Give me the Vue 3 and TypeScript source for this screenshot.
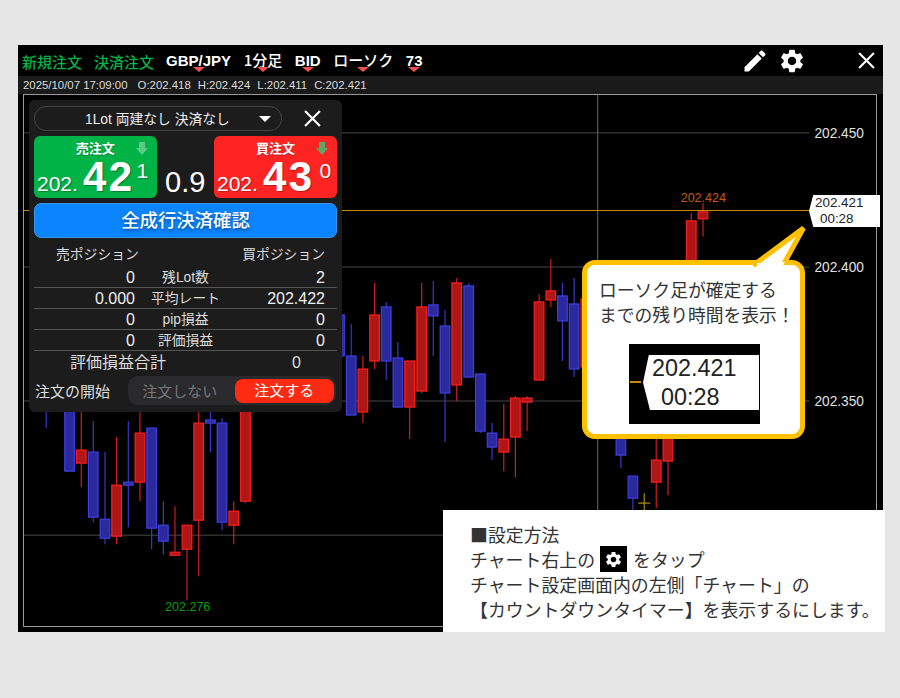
<script setup lang="ts">
type Candle = [number, number, number, number, number, 'r' | 'b']

// x, body top, body bottom, wick top, wick bottom, colour
const candles: Candle[] = [
  [17.4, 130, 308, 120, 320, 'b'],
  [46.7, 380, 405, 360, 428, 'b'],
  [70, 380, 471, 370, 471, 'b'],
  [81.7, 450, 463, 400, 487, 'r'],
  [93.7, 452, 517, 421, 522, 'b'],
  [105.4, 519, 538, 452, 544, 'b'],
  [117, 485, 536, 437, 544, 'r'],
  [128.7, 482, 485, 421, 527, 'b'],
  [140.3, 433, 482, 400, 501, 'r'],
  [152, 428, 528, 428, 549, 'b'],
  [163.7, 525, 541, 501, 554, 'b'],
  [175.3, 552, 555, 506, 555, 'r'],
  [187.3, 525, 549, 525, 600, 'r'],
  [199, 423, 520, 400, 576, 'r'],
  [210.7, 420, 423, 400, 452, 'b'],
  [222.3, 423, 522, 418, 530, 'b'],
  [234, 511, 525, 501, 544, 'r'],
  [245.7, 400, 501, 400, 503, 'r'],
  [339.6, 315, 356, 300, 356, 'b'],
  [351.3, 356, 415, 324, 415, 'b'],
  [363, 369, 412, 356, 423, 'r'],
  [374.7, 315, 361, 283, 369, 'r'],
  [386.3, 307, 361, 302, 380, 'b'],
  [398, 358, 407, 342, 407, 'b'],
  [409.7, 361, 407, 361, 439, 'r'],
  [421.7, 307, 391, 283, 393, 'r'],
  [433.3, 305, 316, 281, 356, 'b'],
  [445, 326, 393, 310, 442, 'b'],
  [456.7, 283, 385, 278, 401, 'r'],
  [468.7, 286, 377, 283, 377, 'b'],
  [480.3, 374, 431, 374, 433, 'b'],
  [492, 433, 447, 423, 460, 'b'],
  [503.7, 439, 452, 404, 471, 'r'],
  [515.3, 398, 437, 396, 477, 'r'],
  [527, 398, 402, 396, 431, 'r'],
  [539, 302, 380, 294, 380, 'r'],
  [550.7, 291, 300, 259, 307, 'r'],
  [562.3, 296, 321, 283, 361, 'b'],
  [574, 304, 369, 278, 377, 'b'],
  [585.7, 299, 367, 290, 375, 'r'],
  [620.7, 420, 455, 420, 468, 'b'],
  [632.7, 476, 498, 476, 520, 'b'],
  [656, 460, 482, 420, 508, 'r'],
  [667.7, 420, 461, 420, 495, 'r'],
  [691, 221, 280, 213, 280, 'r'],
  [702.7, 212, 219, 203, 237, 'r'],
]

const gridLines = [133, 267, 401, 535]
const axisLabels = [
  { y: 133, text: '202.450' },
  { y: 267, text: '202.400' },
  { y: 401, text: '202.350' },
]

const menuItems = [
  { text: 'GBP/JPY', cjk: false },
  { text: '1分足', cjk: true },
  { text: 'BID', cjk: false },
  { text: 'ローソク', cjk: true },
  { text: '73', cjk: false },
]

const rows = [
  { sell: '0', label: '残Lot数', buy: '2' },
  { sell: '0.000', label: '平均レート', buy: '202.422' },
  { sell: '0', label: 'pip損益', buy: '0' },
  { sell: '0', label: '評価損益', buy: '0' },
]

const gearPath =
  'M19.14 12.94c.04-.3.06-.61.06-.94 0-.32-.02-.64-.07-.94l2.03-1.58c.18-.14.23-.41.12-.61l-1.92-3.32c-.12-.22-.37-.29-.59-.22l-2.39.96c-.5-.38-1.03-.7-1.62-.94l-.36-2.54c-.04-.24-.24-.41-.48-.41h-3.84c-.24 0-.43.17-.47.41l-.36 2.54c-.59.24-1.13.57-1.62.94l-2.39-.96c-.22-.08-.47 0-.59.22L2.74 8.87c-.12.21-.08.47.12.61l2.03 1.58c-.05.3-.09.63-.09.94s.02.64.07.94l-2.03 1.58c-.18.14-.23.41-.12.61l1.92 3.32c.12.22.37.29.59.22l2.39-.96c.5.38 1.03.7 1.62.94l.36 2.54c.05.24.24.41.48.41h3.84c.24 0 .44-.17.47-.41l.36-2.54c.59-.24 1.13-.56 1.62-.94l2.39.96c.22.08.47 0 .59-.22l1.92-3.32c.12-.22.07-.47-.12-.61l-2.01-1.58zM12 15.6c-1.98 0-3.6-1.62-3.6-3.6s1.62-3.6 3.6-3.6 3.6 1.62 3.6 3.6-1.62 3.6-3.6 3.6z'
</script>

<template>
  <div class="page">
    <div class="screen">
      <div class="toolbar">
        <span class="order-link">新規注文</span>
        <span class="order-link">決済注文</span>
        <span v-for="item in menuItems" :key="item.text" :class="['menu-item', { cjk: item.cjk }]">{{ item.text }}</span>
        <svg class="tool-icon pencil" viewBox="0 0 24 24" fill="#fff">
          <path d="M3 17.25V21h3.75L17.81 9.94l-3.75-3.75L3 17.25zM20.71 7.04c.39-.39.39-1.02 0-1.41l-2.34-2.34c-.39-.39-1.02-.39-1.41 0l-1.83 1.83 3.75 3.75 1.83-1.83z" />
        </svg>
        <svg class="tool-icon gear" viewBox="0 0 24 24" fill="#fff"><path :d="gearPath" /></svg>
        <svg class="close-icon" viewBox="0 0 16 16" stroke="#fff" stroke-width="2" fill="none">
          <path d="M1 1l14 14M15 1L1 15" />
        </svg>
      </div>
      <div class="status-bar">
        <span class="status-time">2025/10/07 17:09:00</span>
        <span>O:202.418</span>
        <span>H:202.424</span>
        <span>L:202.411</span>
        <span>C:202.421</span>
      </div>
      <div class="chart">
        <svg class="chart-svg" viewBox="24.5 95.5 851 530">
          <line v-for="y in gridLines" :key="y" x1="20" :y1="y" x2="809" :y2="y" stroke="#303030" stroke-width="1.5" />
          <line x1="597.5" y1="90" x2="597.5" y2="630" stroke="#5a5a5a" stroke-width="1.2" />
          <g v-for="c in candles" :key="c[0]">
            <line
              :x1="c[0]" :y1="c[3]" :x2="c[0]" :y2="c[4]"
              :stroke="c[5] === 'r' ? '#d01c1c' : '#3838c8'"
              stroke-width="1.2"
            />
            <rect
              :x="c[0] - 4.8" :y="c[1]" width="9.6" :height="c[2] - c[1]"
              :fill="c[5] === 'r' ? '#b01616' : '#2a2a9e'"
              :stroke="c[5] === 'r' ? '#f82020' : '#3f3fe0'"
              stroke-width="1.2"
            />
          </g>
          <path d="M644 493v17M638 503h12" stroke="#a88a10" stroke-width="1.2" fill="none" />
          <line x1="20" y1="210.7" x2="809" y2="210.7" stroke="#c98a00" stroke-width="1.2" />
          <text v-for="a in axisLabels" :key="a.y" x="814" :y="a.y + 5" class="axis-label">{{ a.text }}</text>
          <text x="703" y="202" class="high-label">202.424</text>
          <text x="188" y="611" class="low-label">202.276</text>
        </svg>
      </div>
    </div>

    <div class="price-tag">
      <span>202.421</span>
      <span>00:28</span>
    </div>

    <div class="order-panel">
      <div class="panel-head">
        <div class="lot-select">
          <span class="lot-text">1Lot 両建なし 決済なし</span>
          <i class="lot-caret"></i>
        </div>
        <svg class="panel-close" viewBox="0 0 16 16" stroke="#fff" stroke-width="2" fill="none">
          <path d="M1 1l14 14M15 1L1 15" />
        </svg>
      </div>
      <div class="quote-row">
        <div class="quote sell">
          <div class="quote-title">売注文</div>
          <svg class="quote-arrow" viewBox="0 0 12 13" fill="#5ccb85"><path d="M3 0h6v6h3l-6 7-6-7h3z" /></svg>
          <div class="quote-price">
            <span class="price-head">202.</span><span class="price-main">42</span><span class="price-tail">1</span>
          </div>
        </div>
        <div class="spread">0.9</div>
        <div class="quote buy">
          <div class="quote-title">買注文</div>
          <svg class="quote-arrow" viewBox="0 0 12 13" fill="#5aa862"><path d="M3 0h6v6h3l-6 7-6-7h3z" /></svg>
          <div class="quote-price">
            <span class="price-head">202.</span><span class="price-main">43</span><span class="price-tail">0</span>
          </div>
        </div>
      </div>
      <button class="close-all">全成行決済確認</button>
      <div class="pos-head">
        <span>売ポジション</span>
        <span>買ポジション</span>
      </div>
      <div v-for="row in rows" :key="row.label" class="pos-row">
        <span class="pos-sell">{{ row.sell }}</span>
        <span class="pos-label">{{ row.label }}</span>
        <span class="pos-buy">{{ row.buy }}</span>
      </div>
      <div class="pos-total">
        <span>評価損益合計</span>
        <span class="total-value">0</span>
      </div>
      <div class="order-start">
        <span class="start-label">注文の開始</span>
        <div class="toggle">
          <span class="toggle-off">注文しない</span>
          <span class="toggle-on">注文する</span>
        </div>
      </div>
    </div>

    <div class="callout">
      <svg class="callout-tail" viewBox="0 0 60 40">
        <path d="M0 38.5L50.5 1 31 36.5" fill="#fff" stroke="#ffc000" stroke-width="5" stroke-linejoin="miter" />
        <path d="M4 40h25l3-5L4 36z" fill="#fff" />
      </svg>
      <p class="callout-text">ローソク足が確定する<br />までの残り時間を表示！</p>
      <div class="callout-sample">
        <i class="sample-dash"></i>
        <div class="sample-tag">
          <span>202.421</span>
          <span>00:28</span>
        </div>
      </div>
    </div>

    <div class="howto">
      <div>■設定方法</div>
      <div class="howto-line">
        チャート右上の
        <span class="gear-chip">
          <svg viewBox="0 0 24 24" fill="#fff"><path :d="gearPath" /></svg>
        </span>
        をタップ
      </div>
      <div>チャート設定画面内の左側「チャート」の</div>
      <div>【カウントダウンタイマー】を表示するにします。</div>
    </div>
  </div>
</template>

<style>
body {
  margin: 0;
  background: #e6e6e6;
}
</style>

<style scoped>
.page {
  position: relative;
  width: 900px;
  height: 698px;
  box-sizing: border-box;
  padding: 45px 17px 66px 18px;
  background: #e6e6e6;
  overflow: hidden;
  font-family: 'Liberation Sans', 'Noto Sans CJK JP', sans-serif;
}

.screen {
  display: flex;
  flex-direction: column;
  height: 100%;
  background: #000;
}

.toolbar {
  display: flex;
  align-items: center;
  height: 31px;
  flex: none;
  padding: 0 8px 0 4px;
  box-sizing: border-box;
}

.order-link {
  margin-right: 12px;
  padding-top: 2px;
  font-size: 15px;
  font-weight: 500;
  color: #00b347;
}

.menu-item {
  position: relative;
  margin-right: 12.6px;
  font-size: 15px;
  font-weight: 700;
  line-height: 17px;
  color: #fff;
}

.menu-item.cjk {
  top: -1px;
  font-family: 'Noto Sans CJK JP', sans-serif;
  font-weight: 500;
}

.menu-item::after {
  content: '';
  position: absolute;
  left: 50%;
  bottom: -3px;
  margin-left: -6px;
  border-left: 6px solid transparent;
  border-right: 6px solid transparent;
  border-top: 5px solid #ef5050;
}

.menu-item.cjk::after {
  bottom: -4px;
}

.tool-icon {
  flex: none;
  display: block;
}

.pencil {
  width: 28px;
  height: 28px;
  margin-left: auto;
}

.gear {
  width: 28px;
  height: 28px;
  margin-left: 9px;
}

.close-icon {
  width: 17px;
  height: 17px;
  margin-left: 52px;
  flex: none;
}

.status-bar {
  display: flex;
  align-items: center;
  gap: 7px;
  height: 18px;
  flex: none;
  padding-left: 5px;
  background: #1a1a1a;
  font-size: 11.4px;
  color: #ddd;
}

.status-time {
  margin-right: 3px;
}

.chart {
  flex: 1;
  min-height: 0;
  margin: 0 6px 5px 5px;
  border: 1.5px solid #9a9a9a;
  overflow: hidden;
}

.chart-svg {
  display: block;
  width: 100%;
  height: 100%;
}

.axis-label {
  font-size: 13.7px;
  fill: #e0e0e0;
}

.high-label {
  font-size: 12.5px;
  fill: #c85a00;
  text-anchor: middle;
}

.low-label {
  font-size: 12.5px;
  fill: #00a000;
  text-anchor: middle;
}

.price-tag {
  position: absolute;
  left: 809px;
  top: 195px;
  width: 71px;
  height: 32px;
  box-sizing: border-box;
  padding-left: 6px;
  display: flex;
  flex-direction: column;
  justify-content: center;
  background: #fff;
  clip-path: polygon(0 50%, 6% 0, 100% 0, 100% 100%, 6% 100%);
  font-size: 13.4px;
  line-height: 16px;
  color: #222;
}

.price-tag span:last-child {
  padding-left: 5px;
}

.order-panel {
  position: absolute;
  left: 29px;
  top: 100px;
  width: 313px;
  height: 312px;
  box-sizing: border-box;
  padding: 6px 5px 0;
  background: #1c1c1c;
  border-radius: 6px;
  color: #eee;
}

.panel-head {
  display: flex;
  align-items: center;
  height: 25px;
}

.lot-select {
  position: relative;
  width: 248px;
  height: 25px;
  box-sizing: border-box;
  border: 1px solid #444;
  border-radius: 12px;
  display: flex;
  align-items: center;
}

.lot-text {
  margin-left: 50px;
  padding-bottom: 2px;
  font-size: 13.8px;
  color: #eee;
}

.lot-caret {
  position: absolute;
  left: 224px;
  top: 9px;
  border-left: 6px solid transparent;
  border-right: 6px solid transparent;
  border-top: 6px solid #fff;
}

.panel-close {
  width: 17px;
  height: 17px;
  margin-left: 22px;
}

.quote-row {
  display: flex;
  align-items: stretch;
  margin-top: 5px;
  height: 62px;
}

.quote {
  position: relative;
  width: 122.5px;
  flex: none;
  box-sizing: border-box;
  border-radius: 6px;
  color: #fff;
}

.sell {
  background: #00b347;
}

.buy {
  width: 123px;
  background: #ff2424;
}

.quote-title {
  height: 21px;
  padding-top: 5px;
  box-sizing: border-box;
  text-align: center;
  font-size: 13px;
  font-weight: 700;
  line-height: 16px;
  text-shadow: 0 1px 1px rgba(0, 0, 0, 0.3);
}

.quote-arrow {
  position: absolute;
  right: 9px;
  top: 6px;
  width: 12px;
  height: 13px;
}

.quote-price {
  display: flex;
  align-items: baseline;
  padding-left: 3px;
  text-shadow: 1px 1px 1px rgba(0, 0, 0, 0.3);
}

.price-head {
  font-size: 21px;
}

.price-main {
  margin-left: 5px;
  font-size: 42px;
  font-weight: 700;
  letter-spacing: 2.5px;
  line-height: 40px;
}

.price-tail {
  margin-left: 2px;
  font-size: 21px;
  line-height: 20px;
  transform: translateY(-13px);
}

.buy .price-tail {
  margin-left: 5px;
}

.spread {
  flex: 1;
  align-self: flex-end;
  text-align: center;
  font-size: 29px;
  line-height: 32px;
  color: #fff;
}

.close-all {
  display: block;
  width: 100%;
  height: 35px;
  margin: 5px 0 0;
  padding: 0 0 4px;
  border: 1px solid #3a95e8;
  border-radius: 7px;
  background: #0a84ff;
  color: #fff;
  font-family: inherit;
  font-size: 18.4px;
  font-weight: 500;
  text-shadow: 0 2px 3px rgba(0, 0, 0, 0.4);
}

.pos-head {
  display: flex;
  justify-content: space-between;
  padding: 0 12px 0 22px;
  margin-top: 7px;
  height: 22px;
  line-height: 19px;
  font-size: 13.8px;
  color: #ddd;
}

.pos-row {
  display: grid;
  grid-template-columns: 101px 101px 1fr;
  align-items: center;
  height: 21px;
  box-sizing: border-box;
  padding: 1px 12px 0 0;
  border-bottom: 1.5px solid #555;
  font-size: 16px;
}

.pos-sell {
  text-align: right;
}

.pos-label {
  line-height: 16px;
  text-align: center;
  font-size: 13.8px;
  color: #ddd;
}

.pos-buy {
  text-align: right;
}

.pos-total {
  position: relative;
  height: 23px;
  line-height: 23px;
  padding-left: 36px;
  font-size: 16px;
  color: #ddd;
}

.total-value {
  position: absolute;
  left: 258px;
  top: 0;
}

.order-start {
  display: flex;
  align-items: center;
  margin-top: 2px;
}

.start-label {
  width: 93px;
  padding-left: 1px;
  flex: none;
  font-size: 15px;
  color: #ddd;
}

.toggle {
  display: flex;
  align-items: center;
  width: 208px;
  height: 29px;
  box-sizing: border-box;
  padding: 2px;
  border-radius: 10px;
  background: #2a2a2c;
  font-size: 15px;
}

.toggle-off {
  width: 100px;
  margin-right: 5px;
  text-align: center;
  color: #777;
}

.toggle-on {
  width: 100px;
  height: 24px;
  line-height: 24px;
  text-align: center;
  border-radius: 8px;
  background: #ff2a12;
  color: #fff;
}

.callout {
  position: absolute;
  left: 582px;
  top: 260px;
  width: 223px;
  height: 179px;
  box-sizing: border-box;
  padding: 14px 0 0 12px;
  border: 5px solid #ffc000;
  border-radius: 13px;
  background: #fff;
}

.callout-tail {
  position: absolute;
  left: 166px;
  top: -38px;
  width: 60px;
  height: 40px;
  overflow: visible;
}

.callout-text {
  margin: 0;
  font-size: 17.8px;
  line-height: 25px;
  color: #333;
  white-space: nowrap;
}

.callout-sample {
  position: relative;
  width: 131px;
  height: 80px;
  margin: 15px 0 0 30px;
  background: #000;
}

.sample-dash {
  position: absolute;
  left: 1px;
  top: 37px;
  width: 11px;
  height: 2px;
  background: #c98a00;
}

.sample-tag {
  position: absolute;
  left: 14px;
  top: 11px;
  width: 116px;
  height: 55px;
  box-sizing: border-box;
  padding-left: 9px;
  display: flex;
  flex-direction: column;
  justify-content: center;
  background: #fff;
  clip-path: polygon(0 50%, 5% 0, 100% 0, 100% 100%, 6% 100%);
  font-size: 23.4px;
  line-height: 29px;
  color: #222;
}

.sample-tag span:last-child {
  padding-left: 9px;
}

.howto {
  position: absolute;
  left: 443px;
  top: 510px;
  width: 442px;
  height: 122px;
  box-sizing: border-box;
  padding: 12px 0 0 27px;
  background: #fff;
  font-family: 'Noto Sans CJK JP', 'Liberation Sans', sans-serif;
  font-size: 17.9px;
  line-height: 24.4px;
  color: #333;
  white-space: nowrap;
}

.howto-line {
  display: flex;
  align-items: center;
}

.gear-chip {
  display: flex;
  align-items: center;
  justify-content: center;
  width: 27px;
  height: 26px;
  margin: 0 6px 0 5px;
  background: #000;
}

.gear-chip svg {
  width: 19px;
  height: 19px;
}
</style>
